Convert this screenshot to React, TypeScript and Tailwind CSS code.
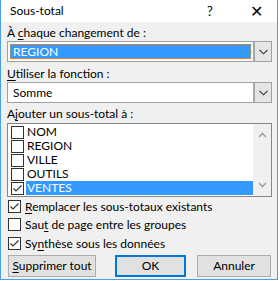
import React from "react";

const font = { fontFamily: 'Lato, "Noto Sans", sans-serif' };

function U({ children }: { children: React.ReactNode }) {
  return <span className="underline underline-offset-2">{children}</span>;
}

function Chevron() {
  return (
    <svg width="9" height="6" viewBox="0 0 9 6">
      <polyline points="0.5,0.8 4.5,4.8 8.5,0.8" fill="none" stroke="#333" strokeWidth="1.1" />
    </svg>
  );
}

function Check({ checked }: { checked?: boolean }) {
  return (
    <div className="w-[13px] h-[13px] border border-[#333] bg-white flex items-center justify-center shrink-0">
      {checked && (
        <svg width="11" height="11" viewBox="0 0 11 11">
          <polyline points="1.5,5.5 4,8 9.5,2.5" fill="none" stroke="#333" strokeWidth="1.2" />
        </svg>
      )}
    </div>
  );
}

function Combo({ children }: { children: React.ReactNode }) {
  return (
    <div className="flex h-[21px] border border-[#a0a0a0] bg-white">
      <div className="flex-1 p-[2px] flex">{children}</div>
      <div className="w-[18px] bg-[#e5e5e5] border-l-2 border-[#a8a8a8] flex items-center justify-center">
        <Chevron />
      </div>
    </div>
  );
}

export default function App() {
  const items = ["NOM", "REGION", "VILLE", "OUTILS", "VENTES"];
  return (
    <div className="w-[280px] h-[281px] bg-white text-[12px] text-black leading-none" style={font}>
      <div className="w-[278px] h-[280px] border-l border-r border-b border-[#4aa0e6] flex flex-col bg-[#f0f0f0]">
        <div className="h-[22px] bg-white flex items-center pl-[9px] shrink-0">
          <span className="flex-1">Sous-total</span>
          <span className="w-[20px] text-center mr-[26px] text-[13px]">?</span>
          <span className="w-[20px] text-center mr-[11px] text-[16px] font-light">✕</span>
        </div>
        <div className="pl-[6px] pr-[5px] flex flex-col">
          <div className="mt-[4px] h-[14px] flex items-center">
            <span>
              À <U>c</U>haque changement de :
            </span>
          </div>
          <div className="mt-[1px]">
            <Combo>
              <div className="flex-1 bg-[#3399ff] text-white border border-dotted border-[#e8883a] flex items-center pl-[2px]">
                REGION
              </div>
            </Combo>
          </div>
          <div className="mt-[5px] h-[14px] flex items-center">
            <span>
              <U>U</U>tiliser la fonction :
            </span>
          </div>
          <div className="mt-[1px]">
            <Combo>
              <div className="flex-1 flex items-center pl-[3px]">Somme</div>
            </Combo>
          </div>
          <div className="mt-[4px] h-[14px] flex items-center">
            <span>
              A<U>j</U>outer un sous-total à :
            </span>
          </div>
          <div className="mt-[2px] h-[74px] border border-[#828790] bg-white flex">
            <div className="flex-1 pt-[1px] flex flex-col">
              {items.map((it) => (
                <div key={it} className="h-[14px] flex items-center">
                  <div className="pl-[3px] pr-[2px] flex items-center">
                    <Check checked={it === "VENTES"} />
                  </div>
                  <div
                    className={
                      "flex-1 h-full flex items-center pl-[1px] " +
                      (it === "VENTES" ? "bg-[#3399ff] text-white" : "")
                    }
                  >
                    {it}
                  </div>
                </div>
              ))}
            </div>
            <div className="w-[18px] bg-[#f0f0f0] flex flex-col justify-between items-center py-[8px]">
              <svg width="9" height="6" viewBox="0 0 9 6">
                <polyline points="1,5 4.5,1.5 8,5" fill="none" stroke="#a3a3a3" strokeWidth="1.6" />
              </svg>
              <svg width="9" height="6" viewBox="0 0 9 6">
                <polyline points="1,1 4.5,4.5 8,1" fill="none" stroke="#a3a3a3" strokeWidth="1.6" />
              </svg>
            </div>
          </div>
          <div className="mt-[3px] flex flex-col pl-[1px]">
            <div className="h-[13px] flex items-center gap-[4px]">
              <Check checked />
              <span>
                <U>R</U>emplacer les sous-totaux existants
              </span>
            </div>
            <div className="mt-[5px] h-[13px] flex items-center gap-[4px]">
              <Check />
              <span>
                Sau<U>t</U> de page entre les groupes
              </span>
            </div>
            <div className="mt-[6px] h-[13px] flex items-center gap-[4px]">
              <Check checked />
              <span>
                Sy<U>n</U>thèse sous les données
              </span>
            </div>
          </div>
          <div className="mt-[5px] flex h-[22px] pl-[1px]">
            <div className="w-[88px] border border-[#adadad] bg-[#e1e1e1] flex items-center justify-center">
              <span>
                <U>S</U>upprimer tout
              </span>
            </div>
            <div className="ml-[19px] w-[71px] border-2 border-[#0078d7] bg-[#e1e1e1] flex items-center justify-center">
              OK
            </div>
            <div className="ml-[11px] w-[74px] border border-[#adadad] bg-[#e1e1e1] flex items-center justify-center">
              Annuler
            </div>
          </div>
        </div>
      </div>
    </div>
  );
}
